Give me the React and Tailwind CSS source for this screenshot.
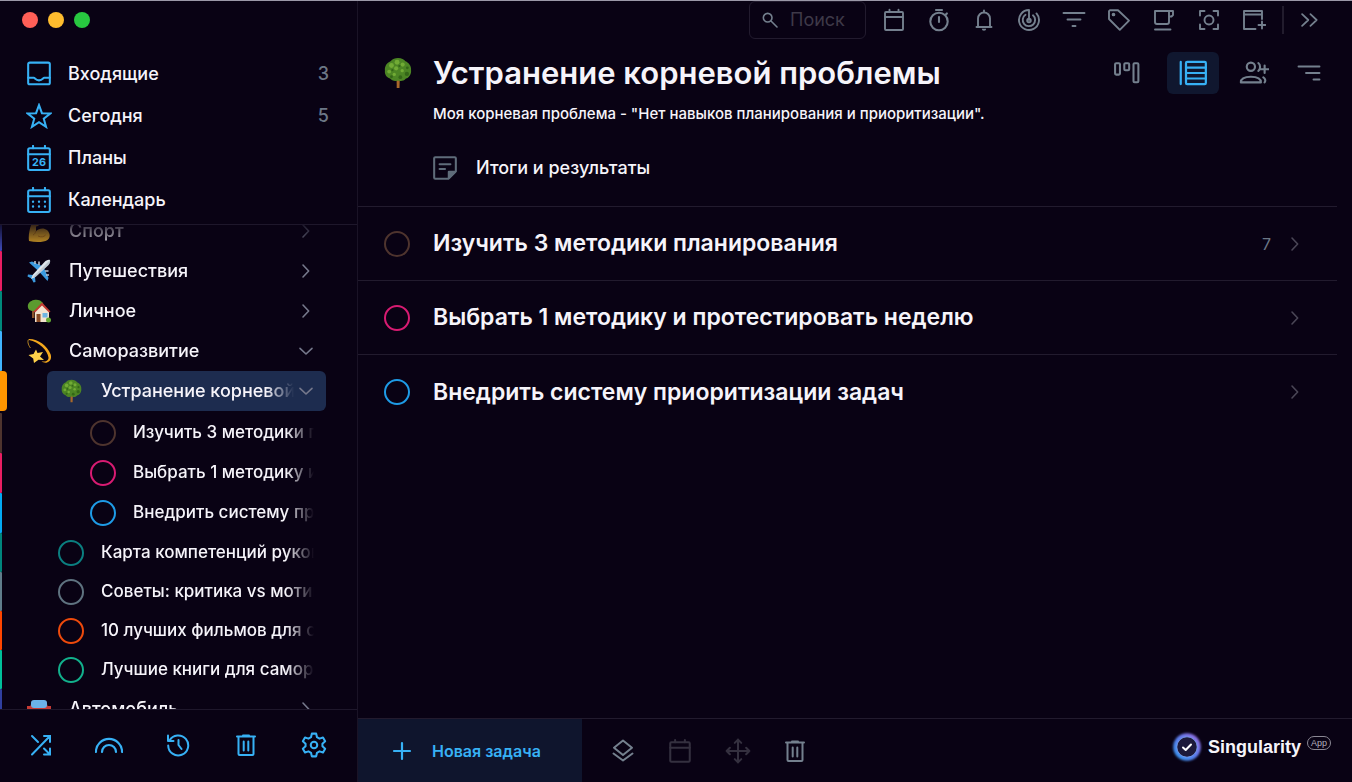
import React, { useState } from "react";

const FONT = "font-['Inter','Noto_Sans',sans-serif]";

const Icon = ({ children, size = "size-6", width = 1.9, className = "" }) => (
  <svg
    viewBox="0 0 24 24"
    fill="none"
    stroke="currentColor"
    strokeWidth={width}
    strokeLinecap="round"
    strokeLinejoin="round"
    aria-hidden="true"
    className={`${size} shrink-0 ${className}`}
  >
    {children}
  </svg>
);

/* ---------- Icons ---------- */

const InboxIcon = () => (
  <Icon size="size-[26px]">
    <rect x="2" y="1.5" width="20" height="20" rx="1.5" />
    <path d="M2 15.500h5.200c1 0 1.600 2.400 4.800 2.400s3.800-2.400 4.800-2.400H22" />
  </Icon>
);

const StarIcon = () => (
  <Icon size="size-[26px]">
    <path
      strokeLinejoin="miter"
      d="M12 2l2.700 7.400 7.800.3-6.100 4.800 2.100 7.500-6.500-4.300L5.500 22l2.100-7.500L1.500 9.700l7.800-.3z"
    />
  </Icon>
);

const PlansIcon = () => (
  <Icon size="size-[26px]">
    <rect x="2" y="3" width="20" height="20" rx="1.5" />
    <path d="M2 8.500h20M6.500.8V3M17.500.8V3" />
    <text
      x="12"
      y="19.300"
      textAnchor="middle"
      fill="currentColor"
      stroke="none"
      fontSize="10"
      fontWeight="700"
    >
      26
    </text>
  </Icon>
);

const CalendarIcon = () => (
  <Icon size="size-[26px]">
    <rect x="2" y="3" width="20" height="20" rx="1.500" />
    <path d="M2 8.500h20M6.500.8V3M17.500.8V3" />
    <path strokeWidth="2.200" d="M6.500 13.500h0M12 13.500h0M17.500 13.500h0M6.500 18h0M12 18h0M17.500 18h0" />
  </Icon>
);

const EmptyCalendarIcon = ({ size }) => (
  <Icon size={size}>
    <rect x="3" y="4" width="18" height="18" rx="1" />
    <path d="M3 9h18M7.500 1.800V4M16.500 1.800V4" />
  </Icon>
);

const StopwatchIcon = () => (
  <Icon width={2.1}>
    <circle cx="12" cy="13.500" r="8.700" />
    <path d="M9 2h6M12 9v5M18.300 7l1.600-1.600" />
  </Icon>
);

const BellIcon = () => (
  <Icon>
    <path d="M4.500 19h15M6 19v-8.500a6 6 0 0 1 12 0V19M12 4.500V2.500" />
    <path fill="currentColor" stroke="none" d="M9.800 20.800h4.400a2.200 2 0 0 1-4.400 0z" />
  </Icon>
);

const RadarIcon = () => (
  <Icon>
    <path d="M12 12V2a10 10 0 1 0 7.500 3.400" />
    <path d="M8.500 6.800a6.200 6.200 0 1 0 7.500.5" />
    <circle cx="12" cy="12.500" r="1.800" />
  </Icon>
);

const FilterIcon = () => (
  <Icon>
    <path d="M1.500 5h21M5.500 11.500h13M10.500 18h3" />
  </Icon>
);

const TagIcon = () => (
  <Icon>
    <path d="M2 3.200V11L12.800 21.800 22 12.600 11 2.200H3z" />
    <circle cx="6.500" cy="6.500" r=".9" />
  </Icon>
);

const CupIcon = () => (
  <Icon>
    <path d="M3 3h14v11a2 2 0 0 1-2 2H5a2 2 0 0 1-2-2zM17 3h4v4l-1.500 1.500H17M3 21.500h15.500" />
  </Icon>
);

const FocusIcon = () => (
  <Icon>
    <path d="M7.500 3H3v4.500M16.500 3H21v4.500M7.500 21H3v-4.500M16.500 21H21v-4.500" />
    <circle cx="12" cy="12" r="4.500" />
  </Icon>
);

const WindowPlusIcon = () => (
  <Icon>
    <path d="M13.500 21H2V3h18v8M2 6.500h18M20 13.500v7M16.500 17h7" />
  </Icon>
);

const BoardIcon = () => (
  <Icon size="size-[26px]">
    <rect x="1" y="3" width="4.500" height="10.500" rx="1" />
    <rect x="9.500" y="3" width="4.500" height="6.500" rx="1" />
    <rect x="18" y="3" width="4.500" height="17.500" rx="1" />
  </Icon>
);

const ListIcon = () => (
  <Icon size="size-7">
    <path d="M1.500 2.500v19" />
    <rect x="6" y="2.500" width="17" height="19" rx="1" />
    <path d="M6 7.300h17M6 12h17M6 16.700h17" />
  </Icon>
);

const PeoplePlusIcon = () => (
  <Icon size="size-[30px]" width={1.7}>
    <circle cx="9.500" cy="7" r="3.300" />
    <path d="M1.500 19.500c0-3.500 3.500-4.500 8-4.500s8 1 8 4.500zM15.500 4c1.800 1.300 1.800 5 0 6.300M19.500 15.500c1.800 1.200 1.800 3 1 4M20.500 6v6M17.500 9h6" />
  </Icon>
);

const SortIcon = () => (
  <Icon>
    <path d="M1.500 5.500h21M9 12h13.500M16.500 18.500h6" />
  </Icon>
);

const NoteIcon = () => (
  <Icon size="size-[26px]">
    <path d="M15 22H3a1 1 0 0 1-1-1V3a1 1 0 0 1 1-1h18a1 1 0 0 1 1 1v12l-7 7zM7 8.500h10M7 13h5" />
    <path fill="currentColor" d="M15.500 21.500l6-6h-6z" />
  </Icon>
);

const ShuffleIcon = () => (
  <Icon width={2}>
    <path
      strokeLinejoin="miter"
      d="M3 3l6 6M3 21.500L20.500 3.500M15 3h6v6M15 21.500h6v-6M15 15.500l5.500 5.500"
    />
  </Icon>
);

const RainbowIcon = () => (
  <Icon size="size-[28px]">
    <path d="M.8 18a11.200 11.200 0 0 1 22.400 0M6 18a6 6 0 0 1 12 0" />
  </Icon>
);

const HistoryIcon = () => (
  <Icon width={2}>
    <path d="M3.500 7.500a10 10 0 1 1-1.300 5M2 2.500v5.500h5.500M12.500 7v5l3 4" />
  </Icon>
);

const TrashIcon = () => (
  <Icon width={2}>
    <path d="M3 3.500h18M9 2.500h6M4.500 3.500V21a1 1 0 0 0 1 1h13a1 1 0 0 0 1-1V3.500M9.700 8.500v9M14.300 8.500v9" />
  </Icon>
);

const GearIcon = () => (
  <Icon size="size-[26px]">
    <circle cx="12" cy="12" r="3" />
    <path d="M10 1.500h4l.7 3.200 2.400 1.400 3.200-1 2 3.500-2.500 2.200v2.400l2.500 2.200-2 3.500-3.200-1-2.400 1.400-.7 3.200h-4l-.7-3.200-2.400-1.400-3.200 1-2-3.500 2.500-2.200v-2.400L1.700 8.600l2-3.500 3.200 1 2.400-1.400z" />
  </Icon>
);

const LayersIcon = () => (
  <Icon width={2}>
    <path d="M12 1.500l9 7.200-9 7.300-9-7.300zM2.500 14.500l9.500 7 9.500-7" />
  </Icon>
);

const MoveIcon = () => (
  <Icon size="size-[26px]">
    <path d="M12 1.500v21M1.500 12h21M9 4.500l3-3 3 3M9 19.500l3 3 3-3M4.500 9l-3 3 3 3M19.500 9l3 3-3 3" />
  </Icon>
);

const ChevronRight = ({ className }) => (
  <Icon size="size-4" width={2.4} className={className}>
    <path d="M7.500 3l8.500 9-8.500 9" />
  </Icon>
);

const ChevronDown = ({ className }) => (
  <Icon size="size-4" width={2.4} className={className}>
    <path d="M3 8l9 8.500L21 8" />
  </Icon>
);

/* ---------- Pictograms ---------- */

const Tree = ({ className }) => (
  <svg viewBox="0 0 30 34" className={`shrink-0 ${className}`} aria-hidden="true">
    <path fill="#a8682a" d="M13.500 20h3.500l-.4 13h-3z" />
    <path
      fill="#4c8524"
      d="M15 1c4 0 6.500 1.500 8 3.500 3.500 1.500 6.500 5 6 9.500.5 4-2 8-5.500 9-2.500 3-6 3-8.500 2-3 1.500-6.500.5-8.500-2C2.500 21.500.5 18 1 14.500.5 10 3 6 7 4.500 9 2 12 1 15 1z"
    />
    <g fill="#71ab35">
      <circle cx="8" cy="9" r="2.600" />
      <circle cx="14" cy="5.500" r="2.600" />
      <circle cx="20" cy="8" r="2.200" />
      <circle cx="13" cy="12" r="2.200" />
      <circle cx="5.500" cy="15.500" r="2" />
      <circle cx="19.500" cy="14.500" r="1.800" />
      <circle cx="11" cy="18.500" r="1.800" />
    </g>
    <g fill="#346618">
      <circle cx="24.500" cy="18" r="2.300" />
      <circle cx="17.500" cy="21.500" r="2" />
      <circle cx="25" cy="11.500" r="1.500" />
      <circle cx="16.500" cy="9.500" r="1.200" />
      <circle cx="9" cy="14" r="1.200" />
      <circle cx="8" cy="21" r="1.500" />
    </g>
  </svg>
);

const Muscle = () => (
  <svg viewBox="0 0 24 24" className="size-6 shrink-0" aria-hidden="true">
    <path
      fill="#f0b429"
      d="M6 2l5-1 2 4-2 2-2 .5L9 12c3-3 8-3.500 11-1 3.500 3 3.500 8 .5 10-4 2.500-12 2.500-18.500 1C1 16 3 7 6 2z"
    />
    <path fill="none" stroke="#c4831a" d="M9 12c-1 2-1 3-3 4M11 17c3 1.500 6 1 7.500-1" />
  </svg>
);

const Plane = () => (
  <svg viewBox="0 0 24 24" className="size-6 shrink-0" aria-hidden="true">
    <path fill="#3c9be0" d="M2 3.500l3-1 11 5-4 5zM20.500 22l1-3-5-11-5 4zM1 15.500l5 .5 2 2 .5 5-2 .5-2-4-4-2z" />
    <path fill="#dfe5ec" d="M23 1c-2-.6-4 .5-5.500 2L6 15.500 4 20l4.500-2L21 6.500C22.500 5 23.600 3 23 1z" />
    <path fill="#8d9aa8" d="M8.500 18L21 6.500c1.500-1.500 2.500-3.500 2-5.500L6 18z" opacity=".4" />
    <path stroke="#b9c4cf" strokeWidth="1.600" d="M8 2v3M12 2.500V6M22 16h-3M21.500 12H18" />
  </svg>
);

const House = () => (
  <svg viewBox="0 0 24 24" className="size-6 shrink-0" aria-hidden="true">
    <path fill="#8a552b" d="M5 10h2.500v9H5z" />
    <path fill="#5b9b2f" d="M7 1c3-1 7 0 9 3 1 3-1 5-4 6-3 2.500-8 3-10.500 0C-.5 6 2 2 7 1z" />
    <path fill="#f2e3cf" d="M8 12l7.500-7L22 12v11H8z" />
    <path fill="#c13a32" d="M6.500 12.500L15 3.500l8.500 9-1.500 1-7-7-7 7z" />
    <path fill="#8a4b25" d="M9.500 15h4v8h-4z" />
    <path fill="#6db5e3" d="M15.500 14h5v4.500h-5z" />
    <circle cx="21.500" cy="21" r="2.500" fill="#63a832" />
  </svg>
);

const Dizzy = () => (
  <svg viewBox="0 0 24 24" className="size-6 shrink-0" aria-hidden="true">
    <path
      fill="#f3a71c"
      d="M2 0c10 0 18 7 21.500 15 1.500 4 0 7.500-3.500 8.500-2 .5-4-.2-5.500-1 3 .3 7 0 7-4C20.500 11 12 3 2 1z"
    />
    <path fill="none" stroke="#b98724" d="M2 .5C0 1 1 6 3.500 9" />
    <path
      fill="#ffd24a"
      d="M9 10.500l1.500 3.500 5.500-1-3 4.500 4 3.500-5.500-.2L7 24l-.8-4.500L1.500 16l5-1z"
    />
  </svg>
);

const Car = () => (
  <svg viewBox="0 0 24 24" className="size-6 shrink-0" aria-hidden="true">
    <path fill="#c63a34" d="M5 4h14l2 6 2 1v9H1v-9l2-1z" />
    <path fill="#c63a34" d="M0 9h4v3H0zM20 9h4v3h-4z" />
    <rect x="4" y="3" width="16" height="8" rx="3" fill="#6bb2e8" />
    <path fill="#e3e9ef" d="M2 13h5v3H2zM17 13h5v3h-5z" />
  </svg>
);

const Logo = () => (
  <svg viewBox="0 0 34 34" className="size-[34px] shrink-0" aria-hidden="true">
    <defs>
      <linearGradient id="ring" x1="0" y1="1" x2="1" y2="0">
        <stop offset="0" stopColor="#2f9bf0" />
        <stop offset=".5" stopColor="#5d7ff0" />
        <stop offset="1" stopColor="#a36be0" />
      </linearGradient>
      <filter id="glow" x="-20%" y="-20%" width="140%" height="140%">
        <feGaussianBlur stdDeviation="1.300" />
      </filter>
    </defs>
    <circle cx="17" cy="17" r="13.800" fill="url(#ring)" filter="url(#glow)" />
    <circle cx="17" cy="17" r="10.200" fill="#1d1a3b" stroke="#7fa6f2" strokeWidth=".8" />
    <path
      d="M13 17.500l2.700 2.500 5.300-5.500"
      fill="none"
      stroke="#fff"
      strokeWidth="2"
      strokeLinecap="round"
      strokeLinejoin="round"
    />
  </svg>
);

/* ---------- Data ---------- */

const sections = [
  { name: "Входящие", icon: <InboxIcon />, count: 3 },
  { name: "Сегодня", icon: <StarIcon />, count: 5 },
  { name: "Планы", icon: <PlansIcon /> },
  { name: "Календарь", icon: <CalendarIcon /> },
];

const projects = [
  { name: "Спорт", level: 1, bar: "bg-[#3f4bb8]", icon: <Muscle />, chevron: "right" },
  { name: "Путешествия", level: 1, bar: "bg-[#e91e63]", icon: <Plane />, chevron: "right" },
  { name: "Личное", level: 1, bar: "bg-[#00897b]", icon: <House />, chevron: "right" },
  { name: "Саморазвитие", level: 1, bar: "bg-[#40b4ff]", icon: <Dizzy />, chevron: "down" },
  {
    name: "Устранение корневой проблемы",
    level: 2,
    bar: "bg-[#ff9500]",
    icon: <Tree className="h-6 w-[21px]" />,
    chevron: "down",
    active: true,
  },
  { name: "Изучить 3 методики планирования", level: 3, bar: "bg-[#4e342e]", ring: "border-[#4e342e]" },
  { name: "Выбрать 1 методику и протестировать неделю", level: 3, bar: "bg-[#e91e63]", ring: "border-[#d81b72]" },
  { name: "Внедрить систему приоритизации задач", level: 3, bar: "bg-[#03a9f4]", ring: "border-[#1e9be6]" },
  { name: "Карта компетенций руководителя", level: 2, bar: "bg-[#00857c]", ring: "border-[#0b7f80]" },
  { name: "Советы: критика vs мотивация", level: 2, bar: "bg-[#607d8b]", ring: "border-[#5f7380]" },
  { name: "10 лучших фильмов для саморазвития", level: 2, bar: "bg-[#ff4500]", ring: "border-[#ee4a0c]" },
  { name: "Лучшие книги для саморазвития", level: 2, bar: "bg-[#00bf9a]", ring: "border-[#12b08c]" },
  { name: "Автомобиль", level: 1, bar: "bg-[#303f9f]", icon: <Car />, chevron: "right" },
];

const initialTasks = [
  { id: 1, title: "Изучить 3 методики планирования", ring: "border-[#4e342e]", count: 7, done: false },
  { id: 2, title: "Выбрать 1 методику и протестировать неделю", ring: "border-[#d81b72]", done: false },
  { id: 3, title: "Внедрить систему приоритизации задач", ring: "border-[#1e9be6]", done: false },
];

const tools = [
  { label: "Календарь", icon: <EmptyCalendarIcon /> },
  { label: "Таймер", icon: <StopwatchIcon /> },
  { label: "Напоминания", icon: <BellIcon /> },
  { label: "Привычки", icon: <RadarIcon /> },
  { label: "Фильтр", icon: <FilterIcon /> },
  { label: "Теги", icon: <TagIcon /> },
  { label: "Перерыв", icon: <CupIcon /> },
  { label: "Фокус", icon: <FocusIcon /> },
  { label: "Новое окно", icon: <WindowPlusIcon /> },
];

const footerTools = [
  { label: "Перемешать", icon: <ShuffleIcon /> },
  { label: "Радуга", icon: <RainbowIcon /> },
  { label: "История", icon: <HistoryIcon /> },
  { label: "Корзина", icon: <TrashIcon /> },
  { label: "Настройки", icon: <GearIcon /> },
];

const rowByLevel = {
  1: "pl-[19px] pr-3 text-lg",
  2: "ml-10 pl-[11px] pr-3",
  3: "ml-10 pl-[43px] pr-3",
};

/* ---------- Sidebar ---------- */

const ProjectRow = ({ project }) => {
  const { name, level, bar, icon, ring, chevron, active } = project;
  const height = level === 2 && !active ? "h-[39px]" : "h-10";

  return (
    <li className={`flex shrink-0 items-center ${height} ${active ? "mb-0.5" : ""}`}>
      <span className="h-full w-[7px] shrink-0">
        <span className={`block h-full ${bar} ${active ? "w-[7px] rounded-r-sm" : "w-0.5 rounded-r-[1px]"}`} />
      </span>
      <div
        className={`mr-[31px] flex h-full min-w-0 flex-1 items-center ${rowByLevel[level]} ${
          active ? "rounded-md bg-[#1d2c4f] text-lg" : ""
        }`}
      >
        {ring ? (
          <input
            type="checkbox"
            aria-label={name}
            className={`size-[26px] shrink-0 appearance-none rounded-full border-2 ${ring}`}
          />
        ) : (
          <span className="flex w-[26px] shrink-0 justify-center">{icon}</span>
        )}
        <a
          href="#"
          className={`ml-[17px] min-w-0 flex-1 overflow-hidden whitespace-nowrap ${
            level > 1 ? "[mask-image:linear-gradient(to_left,transparent,#000_28px)]" : ""
          }`}
        >
          {name}
        </a>
        {chevron === "right" && <ChevronRight className="ml-1 text-[#76798c]" />}
        {chevron === "down" && <ChevronDown className="ml-1 text-[#76798c]" />}
      </div>
    </li>
  );
};

const Sidebar = () => (
  <aside className="flex w-[358px] shrink-0 flex-col border-r border-[#1a1326] font-medium">
    <div className="flex shrink-0 gap-2.5 px-[22px] pt-[11px]">
      <button type="button" aria-label="Закрыть" className="size-4 rounded-full bg-[#ff5f57]" />
      <button type="button" aria-label="Свернуть" className="size-4 rounded-full bg-[#febc2e]" />
      <button type="button" aria-label="Развернуть" className="size-4 rounded-full bg-[#28c840]" />
    </div>

    <nav className="shrink-0 border-b border-[#1e172b] pt-[25px] pb-[3px] text-lg">
      {sections.map((section) => (
        <a key={section.name} href="#" className="flex h-[42px] items-center pr-7 pl-[26px]">
          <span className="text-[#37b1f5]">{section.icon}</span>
          <span className="ml-4 flex-1">{section.name}</span>
          {section.count && <span className="text-[#6c7786]">{section.count}</span>}
        </a>
      ))}
    </nav>

    <div className="min-h-0 flex-1 overflow-hidden text-[17px] [mask-image:linear-gradient(to_bottom,rgba(0,0,0,0.2),#000_26px)]">
      <ul className="-mt-3.5 flex flex-col">
        {projects.map((project) => (
          <ProjectRow key={project.name} project={project} />
        ))}
      </ul>
    </div>

    <div className="flex h-[73px] shrink-0 items-center justify-between border-t border-[#1e172b] pr-[29px] pb-0.5 pl-[27px] text-[#37b1f5]">
      {footerTools.map((tool) => (
        <button key={tool.label} type="button" aria-label={tool.label} className="flex w-7 justify-center">
          {tool.icon}
        </button>
      ))}
    </div>
  </aside>
);

/* ---------- Main ---------- */

const Toolbar = () => (
  <div className="flex h-[38px] shrink-0 items-center justify-end pr-8 text-[#74808e]">
    <label className="mr-4 flex h-[38px] w-[117px] items-center rounded-md border border-[#221b2e] pl-3">
      <Icon size="size-4" width={2.4}>
        <circle cx="8.500" cy="8.500" r="6.500" />
        <path d="M13.500 13.500l9 9" />
      </Icon>
      <input
        type="text"
        aria-label="Поиск"
        placeholder="Поиск"
        className="ml-3 w-full min-w-0 bg-transparent text-lg outline-none placeholder:text-[#3e3948]"
      />
    </label>
    <div className="flex gap-[21px]">
      {tools.map((tool) => (
        <button key={tool.label} type="button" aria-label={tool.label}>
          {tool.icon}
        </button>
      ))}
    </div>
    <span className="mx-4 h-7 w-0.5 bg-[#221c2d]" />
    <button type="button" aria-label="Ещё">
      <Icon size="size-5" width={2.1}>
        <path d="M2.500 5l7.500 7-7.500 7M12.500 5l7.500 7-7.500 7" />
      </Icon>
    </button>
  </div>
);

const ProjectHeader = () => (
  <header className="shrink-0 border-b border-[#221b2e] pb-6">
    <div className="flex items-center pt-[11px]">
      <Tree className="ml-[26px] h-8 w-[28px]" />
      <h1 className="ml-[21px] flex-1 text-[31px] leading-[46px] font-semibold whitespace-nowrap">
        Устранение корневой проблемы
      </h1>
      <div className="flex items-center pr-4 text-[#74808e]">
        <button type="button" aria-label="Доска" className="mr-[27px]">
          <BoardIcon />
        </button>
        <button
          type="button"
          aria-label="Список"
          className="mr-5 flex h-[42px] w-[52px] items-center justify-center rounded-md bg-[#10172f] text-[#37b1f5]"
        >
          <ListIcon />
        </button>
        <button type="button" aria-label="Участники" className="mr-7">
          <PeoplePlusIcon />
        </button>
        <button type="button" aria-label="Сортировка">
          <SortIcon />
        </button>
      </div>
    </div>
    <p className="ml-[75px] pt-1.5 text-[15px] leading-6 font-medium">
      Моя корневая проблема - "Нет навыков планирования и приоритизации".
    </p>
    <a href="#" className="mt-7 ml-[74px] flex items-center text-lg font-medium">
      <span className="text-[#5f6c7a]">
        <NoteIcon />
      </span>
      <span className="ml-[18px]">Итоги и результаты</span>
    </a>
  </header>
);

const App = () => {
  const [tasks, setTasks] = useState(initialTasks);

  const toggleTask = (id) => {
    setTasks((prev) => prev.map((task) => (task.id === id ? { ...task, done: !task.done } : task)));
  };

  return (
    <div className={`flex h-screen overflow-hidden border-t border-[#9b98a8] bg-[#090214] text-[#f6f4fa] ${FONT}`}>
      <Sidebar />

      <main className="flex min-w-0 flex-1 flex-col">
        <Toolbar />

        <div className="min-h-0 flex-1 pr-[15px]">
          <ProjectHeader />
          <ul className="divide-y divide-[#221b2e]">
            {tasks.map((task) => (
              <li key={task.id} className="flex h-[74px] items-center pr-[34px] pl-[26px]">
                <input
                  id={`task-${task.id}`}
                  type="checkbox"
                  checked={task.done}
                  onChange={() => toggleTask(task.id)}
                  className={`size-[26px] shrink-0 appearance-none rounded-full border-2 ${task.ring}`}
                />
                <label htmlFor={`task-${task.id}`} className="ml-[23px] flex-1 text-[23px] font-semibold">
                  {task.title}
                </label>
                {task.count && <span className="mr-4 text-base text-[#6c7786]">{task.count}</span>}
                <ChevronRight className="text-[#4a4656]" />
              </li>
            ))}
          </ul>
        </div>

        <footer className="flex h-16 shrink-0 items-center border-t border-[#221b2e]">
          <button
            type="button"
            className="flex h-full w-[224px] items-center bg-[#0f152d] pl-8 font-semibold text-[#37b1f5]"
          >
            <Icon width={2.2}>
              <path d="M12 4v16M4 12h16" />
            </Icon>
            <span className="ml-[18px]">Новая задача</span>
          </button>
          <div className="flex flex-1 items-center gap-8 pl-[29px] text-[#74808e]">
            <button type="button" aria-label="Слои">
              <LayersIcon />
            </button>
            <button type="button" aria-label="Дата" disabled className="text-[#34303f]">
              <EmptyCalendarIcon size="size-[26px]" />
            </button>
            <button type="button" aria-label="Переместить" disabled className="text-[#34303f]">
              <MoveIcon />
            </button>
            <button type="button" aria-label="Удалить">
              <TrashIcon />
            </button>
          </div>
          <div className="flex items-center pr-[21px] pb-2 font-['Liberation_Sans',sans-serif]">
            <Logo />
            <span className="ml-1 text-lg font-bold">Singularity</span>
            <span className="mb-2 ml-1.5 rounded-full border border-[#8b8894] px-[3px] text-[9px] leading-3 text-[#b4b1bd]">
              App
            </span>
          </div>
        </footer>
      </main>
    </div>
  );
};

export default App;
